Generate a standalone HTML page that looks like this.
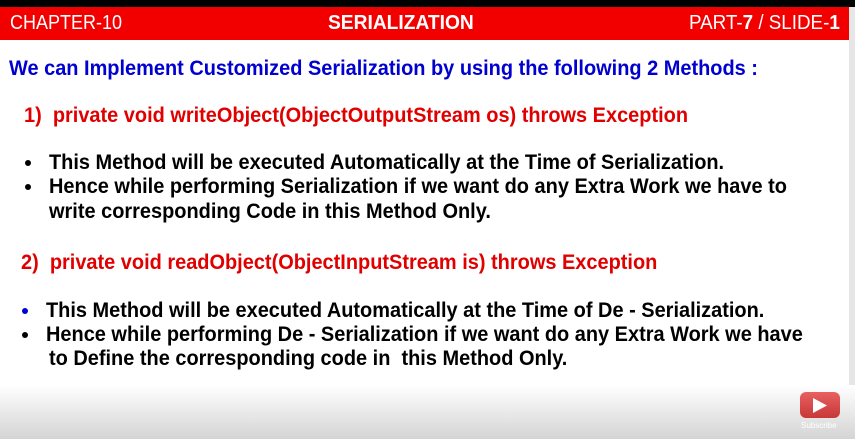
<!DOCTYPE html>
<html><head><style>
body{margin:0;width:855px;height:439px;overflow:hidden;background:#fff;position:relative;font-family:"Liberation Sans",sans-serif;font-weight:bold}
.t{position:absolute;white-space:nowrap;font-size:21px;line-height:24px;transform:scaleX(.95);transform-origin:left top}
.h{position:absolute;white-space:nowrap;font-size:20px;line-height:24px;transform-origin:left top}
.top{position:absolute;left:0;top:0;width:855px;height:7px;background:#000}
.bar{position:absolute;left:0;top:7px;width:849px;height:33px;background:#f20000;color:#fff}
.side{position:absolute;right:0;top:7px;width:6px;height:432px;background:#e6e6e6}
.bot{position:absolute;left:0;top:385px;width:855px;height:54px;background:linear-gradient(#fff,#d4d4d4)}
.blue{color:#0000d0}.red{color:#e00000}.blk{color:#000}
.b{position:absolute;width:6px;height:6px;border-radius:50%;background:#000}
</style></head><body>
<div class="top"></div>
<div class="bar">
<div class="h" style="left:10px;top:4px;font-weight:normal;transform:scaleX(.9)">CHAPTER-10</div>
<div class="h" style="left:328px;top:4px;transform:scaleX(.96)">SERIALIZATION</div>
<div class="h" style="left:689px;top:4px;font-weight:normal;transform:scaleX(.94)">PART-<b>7</b> / SLIDE-<b>1</b></div>
</div>
<div class="side"></div>
<div class="bot"></div>
<div class="t blue" style="left:9px;top:57px">We can Implement Customized Serialization by using the following 2 Methods :</div>
<div class="t red" style="left:24px;top:104px">1)&nbsp; private void writeObject(ObjectOutputStream os) throws Exception</div>
<div class="b" style="left:25px;top:160px"></div>
<div class="t blk" style="left:49px;top:151px">This Method will be executed Automatically at the Time of Serialization.</div>
<div class="b" style="left:25px;top:184px"></div>
<div class="t blk" style="left:49px;top:175px">Hence while performing Serialization if we want do any Extra Work we have to</div>
<div class="t blk" style="left:49px;top:200px">write corresponding Code in this Method Only.</div>
<div class="t red" style="left:21px;top:251px">2)&nbsp; private void readObject(ObjectInputStream is) throws Exception</div>
<div class="b" style="left:22px;top:308px;background:#0000d0"></div>
<div class="t blk" style="left:46px;top:299px">This Method will be executed Automatically at the Time of De - Serialization.</div>
<div class="b" style="left:22px;top:332px"></div>
<div class="t blk" style="left:46px;top:323px">Hence while performing De - Serialization if we want do any Extra Work we have</div>
<div class="t blk" style="left:49px;top:347px">to Define the corresponding code in&nbsp; this Method Only.</div>
<div style="position:absolute;left:800px;top:392px;width:40px;height:26px;border-radius:6px;background:linear-gradient(#e86060,#c83838)"></div>
<svg style="position:absolute;left:812px;top:397px" width="16" height="17"><polygon points="1,1 15,8.5 1,16" fill="#fff"/></svg>
<div style="position:absolute;left:801px;top:421px;font-size:8px;color:#fff;font-weight:normal;font-family:'Liberation Sans',sans-serif">Subscribe</div>
</body></html>
